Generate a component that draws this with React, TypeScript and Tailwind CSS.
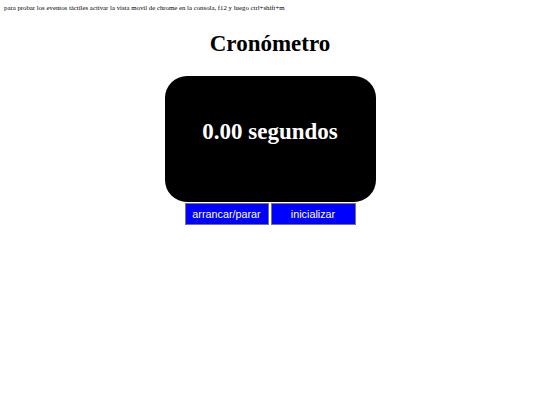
export default function App() {
  return (
    <div className="min-h-[405px] bg-white font-['Liberation_Serif',serif] text-black">
      <p className="pl-1 pt-[3px] text-[6.8px] leading-[9px]">
        para probar los eventos táctiles activar la vista movil de chrome en la consola, f12 y luego ctrl+shift+m
      </p>
      <h1 className="mt-[18px] text-center text-[23px] font-bold leading-[28px]">Cronómetro</h1>
      <div className="mt-[18px] flex flex-col items-center">
        <div className="flex h-[126px] w-[211px] items-center justify-center rounded-[22px] bg-black pb-[16px]">
          <span className="text-[23px] font-bold leading-none text-white">0.00 segundos</span>
        </div>
        <div className="mt-[1px] flex gap-[2px]">
          <button className="h-[22px] w-[84px] border border-[#767676] bg-[#0000ff] font-['Liberation_Sans',sans-serif] text-[10.8px] text-white">
            arrancar/parar
          </button>
          <button className="h-[22px] w-[85px] border border-[#767676] bg-[#0000ff] font-['Liberation_Sans',sans-serif] text-[10.8px] text-white">
            inicializar
          </button>
        </div>
      </div>
    </div>
  )
}
